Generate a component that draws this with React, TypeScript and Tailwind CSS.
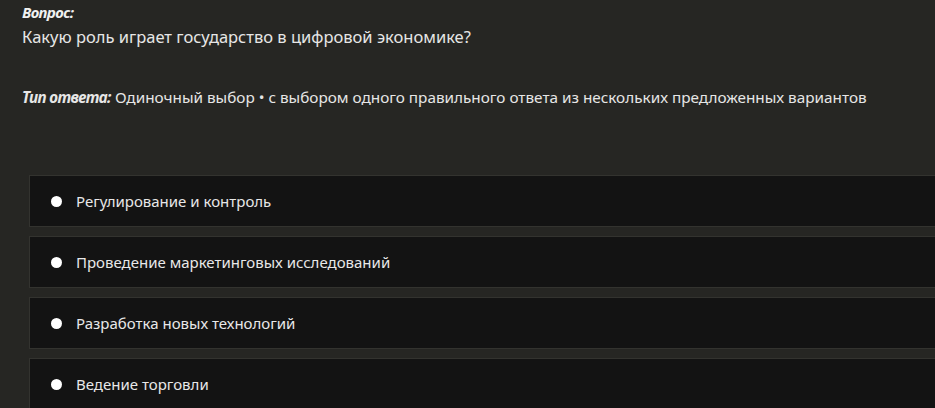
import React from "react";

const options = [
  "Регулирование и контроль",
  "Проведение маркетинговых исследований",
  "Разработка новых технологий",
  "Ведение торговли",
];

export default function App() {
  return (
    <div
      className="w-[935px] h-[408px] overflow-hidden bg-[#262623] text-[#e6e6e6]"
      style={{ fontFamily: '"Noto Sans", "Open Sans", sans-serif' }}
    >
      <div className="pl-[22px] pt-[2px]">
        <div className="text-[15px] font-bold italic leading-[20px] text-[#f0f0f0] tracking-[-0.6px]">Вопрос:</div>
        <div className="text-[16.5px] leading-[24px] mt-[3px]">Какую роль играет государство в цифровой экономике?</div>
        <div className="text-[15.3px] leading-[22px] mt-[37px]">
          <span className="font-bold italic tracking-[-0.6px]">Тип ответа:</span> Одиночный выбор • с выбором одного правильного ответа из нескольких предложенных вариантов
        </div>
      </div>
      <div className="ml-[29px] mt-[67px] flex flex-col gap-[9px]">
        {options.map((o) => (
          <div
            key={o}
            className="h-[52px] w-[920px] bg-[#131313] border border-[#33332f] flex items-center"
          >
            <div className="ml-[21px] w-[11px] h-[11px] rounded-full bg-white" />
            <div className="ml-[14px] text-[15px] text-[#e8e8e8]">{o}</div>
          </div>
        ))}
      </div>
    </div>
  );
}
